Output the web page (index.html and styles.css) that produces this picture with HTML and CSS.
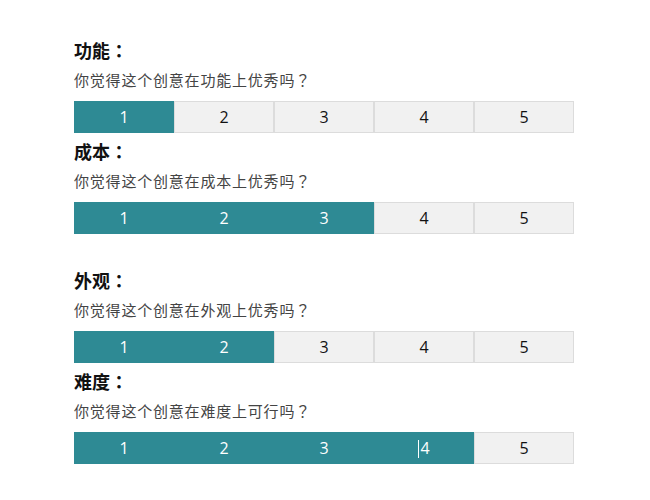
FILE: index.html
```html
<!DOCTYPE html>
<html lang="zh-TW">
<head>
  <meta charset="UTF-8">
  <meta name="viewport" content="width=device-width, initial-scale=1.0">
  <title>创意评分</title>
  <link rel="stylesheet" href="styles.css">
</head>
<body>
  <div class="survey">
    <div class="group">
      <!-- 功能 -->
      <div class="question">
        <h2 class="question-title">功能：</h2>
        <p class="question-text">你觉得这个创意在功能上优秀吗？</p>
        <div class="scale">
          <span class="scale-item active">1</span>
          <span class="scale-item">2</span>
          <span class="scale-item">3</span>
          <span class="scale-item">4</span>
          <span class="scale-item">5</span>
        </div>
      </div>

      <!-- 成本 -->
      <div class="question">
        <h2 class="question-title">成本：</h2>
        <p class="question-text">你觉得这个创意在成本上优秀吗？</p>
        <div class="scale">
          <span class="scale-item active">1</span>
          <span class="scale-item active">2</span>
          <span class="scale-item active">3</span>
          <span class="scale-item">4</span>
          <span class="scale-item">5</span>
        </div>
      </div>
    </div>

    <div class="group">
      <!-- 外观 -->
      <div class="question">
        <h2 class="question-title">外观：</h2>
        <p class="question-text">你觉得这个创意在外观上优秀吗？</p>
        <div class="scale">
          <span class="scale-item active">1</span>
          <span class="scale-item active">2</span>
          <span class="scale-item">3</span>
          <span class="scale-item">4</span>
          <span class="scale-item">5</span>
        </div>
      </div>

      <!-- 难度 -->
      <div class="question">
        <h2 class="question-title">难度：</h2>
        <p class="question-text">你觉得这个创意在难度上可行吗？</p>
        <div class="scale">
          <span class="scale-item active">1</span>
          <span class="scale-item active">2</span>
          <span class="scale-item active">3</span>
          <span class="scale-item active"><span class="caret"></span>4</span>
          <span class="scale-item">5</span>
        </div>
      </div>
    </div>
  </div>
</body>
</html>
```

FILE: styles.css
```css
body {
  margin: 0;
  padding: 0;
  background: #fff;
  font-family: "Noto Sans CJK TC", "Noto Sans CJK SC", "Noto Sans", sans-serif;
  color: #222;
}

.survey {
  padding: 38px 0 0 74px;
  display: flex;
  flex-direction: column;
  gap: 34px;
}

.group {
  display: flex;
  flex-direction: column;
  gap: 6px;
}

.question-title {
  margin: 0;
  font-size: 18px;
  line-height: 24px;
  font-weight: bold;
  color: #111;
}

.question-text {
  margin: 7px 0 11px;
  font-size: 15px;
  line-height: 21px;
  letter-spacing: 0.8px;
  color: #444;
}

.scale {
  display: flex;
  width: 500px;
}

.scale-item {
  box-sizing: border-box;
  width: 100px;
  height: 32px;
  line-height: 30px;
  text-align: center;
  font-family: "Open Sans", "Noto Sans", sans-serif;
  font-size: 16px;
  color: #111;
  background: #f1f1f1;
  border: 1px solid #dcdcdc;
}

.scale-item.active {
  background: #2e8a94;
  border-color: #2e8a94;
  color: #fff;
}

.caret {
  display: inline-block;
  width: 1px;
  height: 18px;
  background: #fff;
  vertical-align: -4px;
  margin-right: 1px;
}
```
